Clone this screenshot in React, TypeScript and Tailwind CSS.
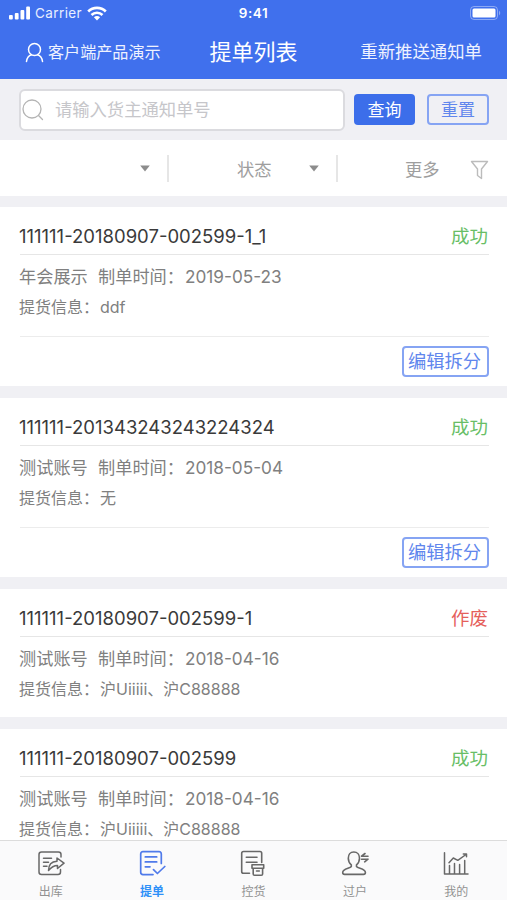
import React from "react";

type Order = {
  code: string;
  status: string;
  account: string;
  date: string;
  info: string;
  editable?: boolean;
};

const orders: Order[] = [
  { code: "111111-20180907-002599-1_1", status: "成功", account: "年会展示", date: "2019-05-23", info: "ddf", editable: true },
  { code: "111111-201343243243224324", status: "成功", account: "测试账号", date: "2018-05-04", info: "无", editable: true },
  { code: "111111-20180907-002599-1", status: "作废", account: "测试账号", date: "2018-04-16", info: "沪Uiiiii、沪C88888" },
  { code: "111111-20180907-002599", status: "成功", account: "测试账号", date: "2018-04-16", info: "沪Uiiiii、沪C88888" },
];

const OutIcon = () => (
  <svg width="28" height="28" viewBox="0 0 28 28" fill="none" stroke="currentColor" strokeWidth="1.5" strokeLinecap="round" strokeLinejoin="round">
    <path d="M24 7V4.500Q24 2 21.500 2H4.500Q2 2 2 4.500V22Q2 24.500 4.500 24.500H21Q23.500 24.500 23.500 22V19.500" />
    <path d="M6.500 8.300H14.500M6.500 12.300H11.500M6.500 16.300H10" />
    <path d="M11.500 20.500C11.500 14.500 15 11.500 20 11.200V8L27 13.200L20.500 18.500V15.500C16.500 15.500 14 17.500 11.500 20.500Z" />
  </svg>
);

const OrderIcon = () => (
  <svg width="28" height="28" viewBox="0 0 28 28" fill="none" stroke="currentColor" strokeWidth="1.7" strokeLinecap="round" strokeLinejoin="round">
    <path d="M23.300 13.500V4Q23.300 1.700 21 1.700H5Q2.700 1.700 2.700 4V22.300Q2.700 24.600 5 24.600H15" />
    <path d="M7.300 6.900H18.700M7.300 11.900H18.700M7.300 16.800H12" />
    <path d="M15.500 19.700L19.400 23.500L26.800 16.500" />
  </svg>
);

const ControlIcon = () => (
  <svg width="28" height="28" viewBox="0 0 28 28" fill="none" stroke="currentColor" strokeWidth="1.6" strokeLinecap="round" strokeLinejoin="round">
    <path d="M22.700 12.500V3.300Q22.700 1.500 21 1.500H4.500Q2.700 1.500 2.700 3.300V21.500Q2.700 23.300 4.500 23.300H10.500" />
    <path d="M7.300 7.300H18M7.300 12.300H18" />
    <path d="M13 14.800H24.700V18.200H13ZM14.200 18.200V24Q14.200 25.300 15.500 25.300H22.300Q23.600 25.300 23.600 24V18.200M17.500 21H20.300" />
  </svg>
);

const TransferIcon = () => (
  <svg width="28" height="28" viewBox="0 0 28 28" fill="none" stroke="currentColor" strokeWidth="1.6" strokeLinecap="round" strokeLinejoin="round">
    <path d="M12.800 2C9.300 2 7.300 4.800 7.300 8.200C7.300 11 8.500 13.300 10.300 14.800V16.500C9 18.500 1.700 18.500 1.700 22.500Q1.700 24.400 3.600 24.400H22.500Q24.400 24.400 24.400 22.500C24.400 18.500 16.800 18.500 15.500 16.500V14.800C17.300 13.300 18.500 11 18.500 8.200C18.500 4.800 16.300 2 12.800 2Z" />
    <path d="M20.500 6.200H27M20.500 6.200L24 3.500M20.500 9.200H27M27 9.200L23.700 11.800" />
  </svg>
);

const MineIcon = () => (
  <svg width="28" height="28" viewBox="0 0 28 28" fill="none" stroke="currentColor" strokeWidth="1.5" strokeLinecap="round" strokeLinejoin="round">
    <path d="M2.500 2.800V24H26M7.500 23.500V15.500M12.500 23.500V13.500M17.600 23.500V14.500M22.700 23.500V10.500" />
    <path d="M7 12.700L11.300 8L15.800 10.300L24 4.500M21.300 4H24.500V6.800" />
  </svg>
);

const tabs = [
  { label: "出库", Icon: OutIcon },
  { label: "提单", Icon: OrderIcon, active: true },
  { label: "控货", Icon: ControlIcon },
  { label: "过户", Icon: TransferIcon },
  { label: "我的", Icon: MineIcon },
];

const Header = () => (
  <header className="h-[79px] shrink-0 bg-[#4070ed] text-white">
    <div className="grid h-[26px] grid-cols-3 items-center pr-1.5 pl-[9px]">
      <div className="flex items-center">
        <svg width="22" height="14" viewBox="0 0 22 14" fill="currentColor">
          <rect x="0" y="9" width="3.800" height="4.500" rx="1" />
          <rect x="5.800" y="7" width="3.800" height="6.500" rx="1" />
          <rect x="11.500" y="4" width="3.800" height="9.500" rx="1" />
          <rect x="17.200" y="0.500" width="3.800" height="13" rx="1" />
        </svg>
        <span className="mt-0.5 ml-1 text-[13.500px] tracking-[0.4px] text-[#e8eeff]">Carrier</span>
        <svg className="ml-[5px]" width="20" height="15" viewBox="0 0 20 15" fill="none" stroke="currentColor" strokeWidth="2.600">
          <path d="M1.200 5.500C6 0.600 14 0.600 18.800 5.500" />
          <path d="M4.500 9C7.500 6 12.500 6 15.500 9" />
          <path d="M10 14.500L6.900 11.300C8.600 9.700 11.400 9.700 13.100 11.300Z" fill="currentColor" stroke="none" />
        </svg>
      </div>
      <span className="mt-0.5 -ml-[3px] text-center text-[13.500px] font-semibold tracking-[0.6px]">9:41</span>
      <svg className="justify-self-end" width="31" height="14" viewBox="0 0 31 14">
        <rect x="0.500" y="0.500" width="27" height="13" rx="3.500" fill="none" stroke="#fff" strokeOpacity="0.4" />
        <rect x="2.500" y="2.500" width="23" height="9" rx="1.500" fill="#fff" />
        <path d="M29 4.500Q31.500 7 29 9.500Z" fill="#fff" fillOpacity="0.4" />
      </svg>
    </div>
    <div className="grid h-[52px] grid-cols-[1fr_auto_1fr] items-center pr-[25px] pl-[25px]">
      <div className="flex items-center gap-1">
        <svg width="19" height="21" viewBox="0 0 19 21" fill="none" stroke="currentColor" strokeWidth="1.500" strokeLinecap="round">
          <circle cx="9.500" cy="7.500" r="6" />
          <path d="M1.500 19.500C2 16 4 13.500 6.500 12.800M17.500 19.500C17 16 15 13.500 12.500 12.800" />
        </svg>
        <span className="text-[16.100px] text-[#eef2ff]">客户端产品演示</span>
      </div>
      <h1 className="text-[22px]">提单列表</h1>
      <span className="text-right text-[17.400px] text-[#eef2ff]">重新推送通知单</span>
    </div>
  </header>
);

const SearchBar = () => (
  <div className="flex h-[61px] shrink-0 items-center bg-[#f0f0f4] pr-[18px] pl-[19px]">
    <div className="flex h-[42px] w-[326px] items-center rounded-md border-2 border-[#dbdbdf] bg-white pl-px">
      <svg width="22" height="22" viewBox="0 0 22 22" fill="none" stroke="#b4b4b4" strokeWidth="1.300" strokeLinecap="round">
        <circle cx="10" cy="10" r="9" />
        <path d="M16.500 16.500L20.500 20.500" />
      </svg>
      <span className="ml-[11px] text-[17.300px] text-[#c6c6ca]">请输入货主通知单号</span>
    </div>
    <button className="ml-[9px] flex h-[31px] w-[61px] items-center justify-center rounded bg-[#3c6eea] pt-0.5 text-[17px] text-white">查询</button>
    <button className="ml-auto flex h-[31px] w-[62px] items-center justify-center rounded border-2 border-[#86a4f3] pt-0.5 text-[17px] text-[#6086ed]">重置</button>
  </div>
);

const Caret = () => (
  <svg width="10" height="7" viewBox="0 0 10 7" fill="#8c8c8c">
    <path d="M0.200 0.500H9.800L5 6.500Z" />
  </svg>
);

const Filters = () => (
  <div className="flex h-14 shrink-0 items-center bg-white text-[17.300px] text-[#9e9e9e]">
    <div className="flex h-[27px] w-[169px] items-center justify-end border-r-2 border-[#e6e6e6] pr-[17px]">
      <Caret />
    </div>
    <div className="flex h-[27px] w-[169px] items-center border-r-2 border-[#e6e6e6] pr-[17px] pl-[68px]">
      <span className="mt-1">状态</span>
      <span className="ml-auto"><Caret /></span>
    </div>
    <div className="flex flex-1 items-center justify-between pr-[18px] pl-[67px]">
      <span className="mt-1">更多</span>
      <svg className="mt-1" width="19" height="20" viewBox="0 0 19 20" fill="none" stroke="#bcbcbc" strokeWidth="1.400" strokeLinejoin="round">
        <path d="M1.500 1.500H17.500L11.500 9V18.500L7.500 15.500V9Z" />
      </svg>
    </div>
  </div>
);

const OrderCard = ({ order }: { order: Order }) => (
  <div className="shrink-0 bg-white pr-[18px] pl-5">
    <div className="flex h-12 items-center justify-between border-b border-[#e6e6e6] pt-3">
      <span className="-ml-px text-[18.500px] text-[#3a3a3a]">{order.code}</span>
      <span className={order.status === "成功" ? "mr-px text-[18.500px] text-[#68be66]" : "mr-px text-[18.500px] text-[#e5605b]"}>{order.status}</span>
    </div>
    <div className={order.editable ? "h-[82px] border-b border-[#ececec] pt-1.5 text-[#808080]" : "h-20 pt-1.5 text-[#808080]"}>
      <div className="-ml-px flex h-[31px] items-center text-[17.200px]">
        <span className="w-[79px]">{order.account}</span>
        <span className="w-[87px]">制单时间：</span>
        <span>{order.date}</span>
      </div>
      <div className="-ml-px flex h-[29px] items-center text-[16px]">
        <span className="w-[81px]">提货信息：</span>
        <span>{order.info}</span>
      </div>
    </div>
    {order.editable && (
      <div className="flex h-[49px] items-center justify-end">
        <button className="flex h-[31px] w-[87px] items-center justify-center rounded border-2 border-[#86a4f3] pr-0.5 text-[18.300px] text-[#6086ed]">编辑拆分</button>
      </div>
    )}
  </div>
);

const App = () => {
  return (
    <div className="flex h-[900px] w-[507px] flex-col overflow-hidden bg-[#f0f0f4] font-['Inter','Noto_Sans_CJK_SC',sans-serif] leading-none whitespace-nowrap">
      <Header />
      <SearchBar />
      <Filters />
      <main className="mt-[11px] flex min-h-0 flex-1 flex-col gap-3 overflow-hidden">
        {orders.map((order) => (
          <OrderCard key={order.code} order={order} />
        ))}
      </main>
      <nav className="grid h-[60px] shrink-0 grid-cols-5 border-t border-[#dcdcdc] bg-[#fafafb]">
        {tabs.map(({ label, Icon, active }) => (
          <div key={label} className="flex flex-col items-center pt-[9px] text-[#686868]">
            <span className={active ? "text-[#4f7aea]" : ""}><Icon /></span>
            <span className={active ? "mt-2 text-[12px] font-bold text-[#2e90f8]" : "mt-2 text-[12px] text-[#929292]"}>{label}</span>
          </div>
        ))}
      </nav>
    </div>
  );
};

export default App;
